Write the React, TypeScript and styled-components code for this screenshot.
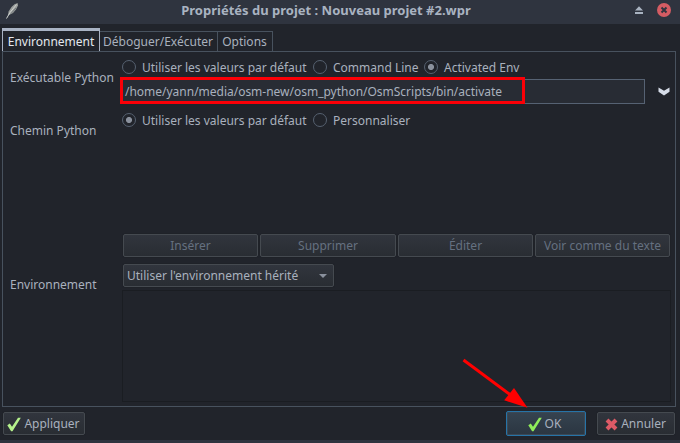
import React from "react";
import styled, { createGlobalStyle, css } from "styled-components";

const GlobalStyle = createGlobalStyle`
  * { box-sizing: border-box; }
  body {
    margin: 0;
    overflow: hidden;
    background: #21242b;
    font-family: "Noto Sans", sans-serif;
    font-size: 12px;
    line-height: 16px;
    color: #a9b1be;
  }
`;

const Window = styled.div`
  position: relative;
  display: flex;
  flex-direction: column;
  width: 680px;
  height: 443px;
  background: #21242b;
  border-bottom: 3px solid #2f343f;
  white-space: nowrap;
`;

const TitleBar = styled.header`
  display: grid;
  grid-template-columns: 30px 592px 1fr;
  align-items: center;
  height: 24px;
  background: #2f343f;
`;

const Title = styled.h1`
  margin: 0;
  padding-bottom: 4px;
  text-align: center;
  font-size: 13px;
  line-height: 16px;
  font-weight: 700;
  color: #a9b3c1;
`;

const WindowControls = styled.div`
  display: flex;
  justify-content: flex-end;
  align-items: center;
  gap: 14px;
  height: 24px;
  padding: 0 9px 4px 0;
`;

const Feather = styled.svg`
  display: block;
  margin: -4px 0 0 5px;
`;

const TabStrip = styled.nav`
  display: flex;
  align-items: flex-end;
  height: 27px;
  padding-left: 2px;
`;

const Tab = styled.div<{ $width: number; $active?: boolean }>`
  width: ${(p) => p.$width}px;
  height: 20px;
  padding: 2px 1px 0 0;
  text-align: center;
  border: 1px solid #48525e;
  border-bottom: 0;
  border-left-width: 0;
  ${(p) =>
    p.$active &&
    css`
      height: 23px;
      padding: 3px 0 0;
      border: 1px solid #a9b3c4;
      border-top-width: 3px;
      border-bottom: 0;
      color: #e4e8ef;
    `}
`;

const Panel = styled.main`
  display: flex;
  flex-direction: column;
  width: 674px;
  height: 356px;
  margin-left: 2px;
  border: 1px solid #48525e;
  padding: 7px 4px 0 7px;
`;

const Field = styled.section<{ $height: number }>`
  display: grid;
  grid-template-columns: 112px 1fr;
  height: ${(p) => p.$height}px;
`;

const Label = styled.div<{ $top: number }>`
  padding-top: ${(p) => p.$top}px;
`;

const RadioRow = styled.div`
  display: flex;
  height: 16px;
  align-items: center;
`;

const RadioOption = styled.label<{ $width: number }>`
  display: flex;
  align-items: center;
  gap: 6px;
  width: ${(p) => p.$width}px;
`;

const RadioText = styled.span`
  padding-top: 2px;
`;

const RadioDot = styled.span<{ $on?: boolean }>`
  flex: none;
  width: 14px;
  height: 14px;
  border: 1px solid #566170;
  border-radius: 50%;
  background: ${(p) =>
    p.$on ? "radial-gradient(circle, #8a919d 0 2.7px, transparent 3.3px)" : "transparent"};
`;

const PathRow = styled.div`
  display: flex;
  align-items: center;
  height: 25px;
  margin-top: 4px;
`;

const PathInput = styled.div`
  position: relative;
  width: 523px;
  height: 25px;
  padding: 4px 2px;
  border: 1px solid #566273;
  background: #282c34;
  letter-spacing: -0.015px;
`;

const Highlight = styled.div`
  position: absolute;
  left: -3px;
  top: -3px;
  width: 405px;
  height: 27px;
  border: 3px solid #fb0007;
`;

const Chevron = styled.svg`
  margin-left: 13px;
`;

const ButtonRow = styled.div`
  display: grid;
  grid-template-columns: 135px 136px 135px 135px;
  column-gap: 2px;
  padding-left: 113px;
`;

const Button = styled.button<{ $width?: number; $tone?: "disabled" | "primary" }>`
  display: flex;
  align-items: center;
  justify-content: center;
  gap: 3px;
  height: 23px;
  ${(p) => p.$width && `width: ${p.$width}px;`}
  padding: ${(p) => (p.$tone === "disabled" ? "1px 0 0" : "1px 1px 0 0")};
  font: inherit;
  color: ${(p) => (p.$tone === "disabled" ? "#657080" : "#a9b1be")};
  background: linear-gradient(#31353d, #292d33);
  border: 1px solid #454a50;
  border-radius: 2px;
  box-shadow: 0 0 1px #14171b;
  ${(p) =>
    p.$tone === "primary" &&
    css`
      height: 25px;
      padding-right: 3px;
      background: linear-gradient(#364350, #2b3641);
      border-color: #2674a8;
      box-shadow: inset 0 0 0 1px #3c4854;
    `}
`;

const Combo = styled.div`
  display: flex;
  align-items: center;
  justify-content: space-between;
  width: 211px;
  height: 23px;
  margin: 0 0 3px 1px;
  padding: 1px 6px 0 3px;
  background: linear-gradient(#31353d, #292d33);
  border: 1px solid #454a50;
  border-radius: 2px;
  box-shadow: 0 0 1px #14171b;
`;

const EnvironmentList = styled.div`
  width: 549px;
  height: 112px;
  border: 1px solid #1a1d22;
`;

const Footer = styled.footer`
  display: flex;
  align-items: center;
  height: 33px;
  padding: 0 5px 0 3px;
`;

const Spacer = styled.div<{ $width?: number }>`
  flex: ${(p) => (p.$width ? `0 0 ${p.$width}px` : "1")};
`;

const PointerArrow = styled.svg`
  position: absolute;
  left: 460px;
  top: 355px;
`;

function Radio({ text, width, on }: { text: string; width: number; on?: boolean }) {
  return (
    <RadioOption $width={width}>
      <RadioDot $on={on} />
      <RadioText>{text}</RadioText>
    </RadioOption>
  );
}

function Check({ color }: { color: string }) {
  return (
    <svg width="14" height="15" viewBox="0 0 14 15">
      <path d="M0.3 8.3 L2.8 6.6 L5 9.8 L11 0.8 L13.8 0.8 L5.5 14.2 L4.1 14.2 Z" fill={color} />
    </svg>
  );
}

export default function App() {
  return (
    <>
      <GlobalStyle />
      <Window>
        <TitleBar>
          <Feather width="15" height="18" viewBox="0 0 15 18">
            <path d="M3 14.5 L3.6 10.5 L6.5 6 L9.5 3.2 L12.6 2 L13 4.5 L11 8.5 L8 12 L5 13.5 Z" fill="#9a9e9c" />
            <path d="M1.5 17.5 L5 11.5 L11.5 3.5" stroke="#d0d3d0" strokeWidth="1" fill="none" />
            <path d="M6 12.5 L11 7" stroke="#6a6f72" strokeWidth="0.8" />
          </Feather>
          <Title>Propriétés du projet : Nouveau projet #2.wpr</Title>
          <WindowControls>
            <svg width="8" height="8" viewBox="0 0 8 8">
              <path d="M4 0.3 L8 4.6 H0 Z M0 6 H8 V8 H0 Z" fill="#a9b3c1" />
            </svg>
            <svg width="14" height="14" viewBox="0 0 14 14">
              <circle cx="7" cy="7" r="7" fill="#d45c63" />
              <path d="M4.5 4.5 L9.5 9.5 M9.5 4.5 L4.5 9.5" stroke="#2f343f" strokeWidth="2" />
            </svg>
          </WindowControls>
        </TitleBar>
        <TabStrip>
          <Tab $width={98} $active>Environnement</Tab>
          <Tab $width={118}>Déboguer/Exécuter</Tab>
          <Tab $width={55}>Options</Tab>
        </TabStrip>
        <Panel>
          <Field $height={53}>
            <Label $top={11}>Exécutable Python</Label>
            <div>
              <RadioRow>
                <Radio text="Utiliser les valeurs par défaut" width={191} />
                <Radio text="Command Line" width={111} />
                <Radio text="Activated Env" width={110} on />
              </RadioRow>
              <PathRow>
                <PathInput>
                  /home/yann/media/osm-new/osm_python/OsmScripts/bin/activate
                  <Highlight />
                </PathInput>
                <Chevron width="12" height="10" viewBox="0 0 12 10">
                  <path d="M0.5 0.5 L6 3.7 L11.5 0.5 V4.8 L6 8.5 L0.5 4.8 Z" fill="#d6dce8" />
                </Chevron>
              </PathRow>
            </div>
          </Field>
          <Field $height={122}>
            <Label $top={11}>Chemin Python</Label>
            <RadioRow>
              <Radio text="Utiliser les valeurs par défaut" width={191} on />
              <Radio text="Personnaliser" width={111} />
            </RadioRow>
          </Field>
          <ButtonRow>
            {["Insérer", "Supprimer", "Éditer", "Voir comme du texte"].map((text) => (
              <Button key={text} $tone="disabled">{text}</Button>
            ))}
          </ButtonRow>
          <Spacer $width={7} />
          <Field $height={142}>
            <Label $top={13}>Environnement</Label>
            <div>
              <Combo>
                Utiliser l'environnement hérité
                <svg width="8" height="4" viewBox="0 0 8 4">
                  <path d="M0 0 H8 L4 4 Z" fill="#8a919d" />
                </svg>
              </Combo>
              <EnvironmentList />
            </div>
          </Field>
        </Panel>
        <Footer>
          <Button $width={82}>
            <Check color="#b5f28c" />
            Appliquer
          </Button>
          <Spacer />
          <Button $width={80} $tone="primary">
            <Check color="#8fec5a" />
            OK
          </Button>
          <Spacer $width={11} />
          <Button $width={78}>
            <svg width="13" height="13" viewBox="0 0 13 13">
              <path d="M2 2 L11 11 M11 2 L2 11" stroke="#dd5a66" strokeWidth="4" />
            </svg>
            Annuler
          </Button>
        </Footer>
        <PointerArrow width="70" height="55" viewBox="0 0 70 55">
          <path d="M3.5 5 L50 39.5" stroke="#ff0000" strokeWidth="3" />
          <path d="M67.5 52.7 L44.2 45.3 L54 33 Z" fill="#ff0000" />
        </PointerArrow>
      </Window>
    </>
  );
}
